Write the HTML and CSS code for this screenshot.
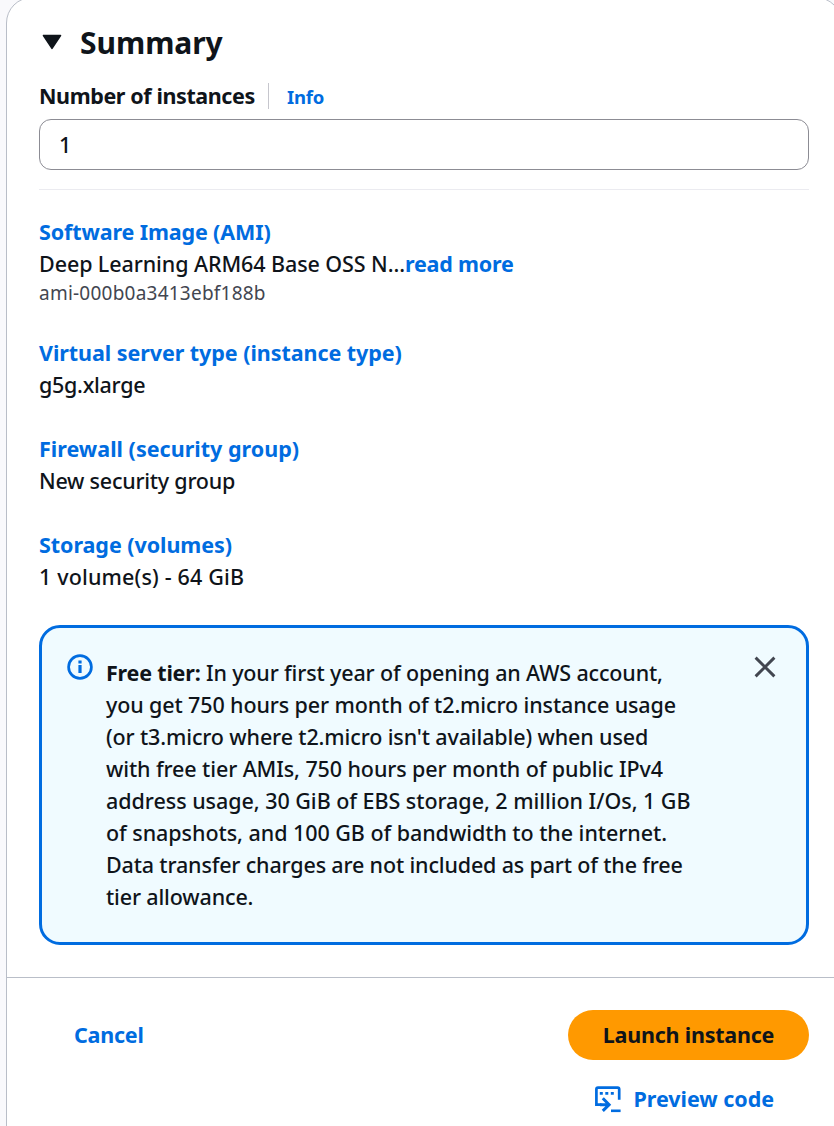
FILE: index.html
```
<!DOCTYPE html>
<html lang="en">
<head>
<meta charset="utf-8">
<title>Summary</title>
<link rel="stylesheet" href="styles.css">
</head>
<body>
<main class="panel">
  <div class="content">
    <header class="header">
      <svg class="caret" width="20" height="16" viewBox="0 0 20 16"><path d="M1.5 1.5h17L10 14.3z" fill="#0f141a" stroke="#0f141a" stroke-width="1.6" stroke-linejoin="round"/></svg>
      <h1 class="title">Summary</h1>
    </header>
    <div class="field-label">
      <label class="label" for="count">Number of instances</label>
      <a class="info"><span class="info-text">Info</span></a>
    </div>
    <input class="input" id="count" type="text" value="1">
    <div class="details">
      <section class="item">
        <a class="link ls-ami">Software Image (AMI)</a>
        <div class="value"><span class="ls-deep">Deep Learning ARM64 Base OSS N...</span><a class="link ls-more">read more</a></div>
        <div class="sub">ami-000b0a3413ebf188b</div>
      </section>
      <section class="item">
        <a class="link">Virtual server type (instance type)</a>
        <div class="value ls-type">g5g.xlarge</div>
      </section>
      <section class="item">
        <a class="link ls-fire">Firewall (security group)</a>
        <div class="value ls-group">New security group</div>
      </section>
      <section class="item">
        <a class="link">Storage (volumes)</a>
        <div class="value ls-vol">1 volume(s) - 64 GiB</div>
      </section>
    </div>
    <aside class="alert">
      <svg class="alert-icon" width="26" height="26" viewBox="0 0 26 26" fill="none" stroke="#006ce0"><circle cx="13" cy="13" r="11.4" stroke-width="2.7"/><path d="M13 11V19M13 6.6v2.9" stroke-width="3.2"/></svg>
      <p class="alert-text">
        <span class="line l1"><b class="strong">Free tier:</b> In your first year of opening an AWS account,</span>
        <span class="line l2">you get 750 hours per month of t2.micro instance usage</span>
        <span class="line l3">(or t3.micro where t2.micro isn't available) when used</span>
        <span class="line l4">with free tier AMIs, 750 hours per month of public IPv4</span>
        <span class="line l5">address usage, 30 GiB of EBS storage, 2 million I/Os, 1 GB</span>
        <span class="line l6">of snapshots, and 100 GB of bandwidth to the internet.</span>
        <span class="line l7">Data transfer charges are not included as part of the free</span>
        <span class="line l8">tier allowance.</span>
      </p>
      <svg class="close" width="22" height="22" viewBox="0 0 22 22"><path d="M1.6 1.6l18.8 18.8M20.4 1.6L1.6 20.4" stroke="#424650" stroke-width="2.9"/></svg>
    </aside>
  </div>
  <footer class="footer">
    <a class="link cancel">Cancel</a>
    <div class="actions">
      <button class="launch">Launch instance</button>
      <a class="preview">
        <svg width="27" height="27" viewBox="0 0 27 27" fill="none" stroke="#006ce0"><path d="M7.5 18.7H2.4V3.2q0-1.6 1.6-1.6h19.6q1.6 0 1.6 1.6v10.6" stroke-width="2.7"/><path d="M5.8 7.3h3M11.3 7.3h3M16.8 7.3h3" stroke-width="2.8"/><path d="M6 18.7h9M8.8 12.3l6.3 6.4-6.3 6.2" stroke-width="3"/><path d="M17 24.8h9.6" stroke-width="2.6"/></svg>
        <span class="link ls-prev">Preview code</span>
      </a>
    </div>
  </footer>
</main>
</body>
</html>
```
FILE: styles.css
```
* { box-sizing: border-box; }
html { height: 1126px; overflow: hidden; background: #f9f9fc; }
body {
  margin: 0;
  height: 1126px;
  overflow: hidden;
  background: #f9f9fc;
  color: #0f141a;
  font: 500 21.5px/32px "Noto Sans", "Open Sans", sans-serif;
}
.panel {
  width: 836px;
  height: 1180px;
  margin: -3px 0 0 6px;
  border: 1px solid #b9bec8;
  border-radius: 26px;
  background: #fff;
}
.content { width: 802px; padding: 21px 0 0 32px; height: 979px; }
.header { display: flex; align-items: center; gap: 18px; height: 48px; padding-left: 3px; }
.caret { margin-top: -3px; }
.title { margin: 0; font-size: 30px; line-height: 48px; font-weight: 700; letter-spacing: -0.05px; }
.field-label { display: flex; align-items: center; height: 32px; margin-top: 13px; }
.label { font-weight: 700; letter-spacing: -0.4px; }
.info {
  height: 26px;
  margin-left: 13px;
  padding-left: 18px;
  border-left: 1px solid #c6c6cd;
  font-size: 18.5px;
  line-height: 28px;
  font-weight: 700;
  letter-spacing: -0.2px;
  color: #006ce0;
}
.input {
  display: block;
  width: 770px;
  height: 51px;
  margin-top: 7px;
  padding: 0 19px 1px;
  border: 1px solid #8c8c94;
  border-radius: 12px;
  background: #fff;
  color: inherit;
  font: inherit;
}
.details {
  display: flex;
  flex-direction: column;
  gap: 32px;
  margin-top: 19px;
  padding-top: 26px;
  border-top: 1px solid #ebebf0;
}
.item { white-space: nowrap; }
.item > .link { display: block; }
.link { color: #006ce0; font-weight: 700; letter-spacing: -0.06px; }
.sub { margin-bottom: -1px; font-size: 19px; line-height: 26px; font-weight: 400; letter-spacing: 0.23px; color: #424650; }
.ls-ami { letter-spacing: -0.13px; }
.ls-deep { letter-spacing: -0.09px; }
.ls-more { letter-spacing: -0.2px; }
.ls-type { letter-spacing: -0.28px; }
.ls-fire { letter-spacing: 0.01px; }
.ls-group { letter-spacing: -0.24px; }
.ls-vol { letter-spacing: 0.16px; }
.alert {
  display: flex;
  align-items: flex-start;
  width: 770px;
  height: 320px;
  margin-top: 32px;
  border: 3px solid #006ce0;
  border-radius: 21px;
  padding: 26px 30px 0 25px;
  background: #f0fbff;
}
.alert-icon { flex: none; }
.alert-text { margin: 3px 0 0 13px; white-space: nowrap; }
.line { display: block; }
.strong { font-weight: 700; letter-spacing: -0.2px; }
.l1 { letter-spacing: -0.15px; }
.l2 { letter-spacing: -0.12px; }
.l3 { letter-spacing: -0.13px; }
.l4 { letter-spacing: -0.1px; }
.l5 { letter-spacing: -0.04px; }
.l6 { letter-spacing: -0.05px; }
.l7 { letter-spacing: -0.16px; }
.l8 { letter-spacing: -0.15px; }
.close { flex: none; margin: 2px 0 0 auto; }
.footer {
  display: flex;
  justify-content: space-between;
  padding: 32px 32px 0 67px;
  border-top: 1px solid #b9bec8;
}
.cancel { margin-top: 9px; letter-spacing: -0.24px; }
.actions { display: flex; flex-direction: column; align-items: flex-end; gap: 23px; }
.launch {
  width: 241px;
  height: 50px;
  border: 0;
  border-radius: 25px;
  padding: 0 0 1px;
  background: #ff9900;
  color: #0f141a;
  font: 700 21.5px/32px "Noto Sans", sans-serif;
  letter-spacing: -0.23px;
}
.preview { display: flex; align-items: center; gap: 12px; margin-right: 35px; }
.ls-prev { letter-spacing: -0.04px; }
```
